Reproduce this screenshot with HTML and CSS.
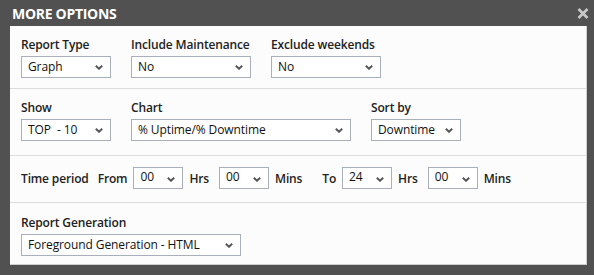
FILE: index.html
```html
<!DOCTYPE html>
<html>
<head>
<meta charset="utf-8">
<link rel="stylesheet" href="styles.css">
</head>
<body>
<div class="dialog">
  <div class="titlebar">
    <span class="title">MORE OPTIONS</span>
    <svg class="close" width="12" height="11" viewBox="0 0 12 11"><path d="M1.5 1 L10.5 10 M10.5 1 L1.5 10" stroke="#c8c8c8" stroke-width="2.6" fill="none"/></svg>
  </div>
  <div class="panel">
    <div class="section s1">
      <div class="field w90">
        <div class="label">Report Type</div>
        <div class="select"><span>Graph</span><svg class="chev" width="8" height="5" viewBox="0 0 8 5"><path d="M0.8 0.8 L4 3.8 L7.2 0.8" stroke="#555" stroke-width="1.9" fill="none"/></svg></div>
      </div>
      <div class="field w120">
        <div class="label">Include Maintenance</div>
        <div class="select"><span>No</span><svg class="chev" width="8" height="5" viewBox="0 0 8 5"><path d="M0.8 0.8 L4 3.8 L7.2 0.8" stroke="#555" stroke-width="1.9" fill="none"/></svg></div>
      </div>
      <div class="field w110">
        <div class="label">Exclude weekends</div>
        <div class="select"><span>No</span><svg class="chev" width="8" height="5" viewBox="0 0 8 5"><path d="M0.8 0.8 L4 3.8 L7.2 0.8" stroke="#555" stroke-width="1.9" fill="none"/></svg></div>
      </div>
    </div>
    <div class="section s2">
      <div class="field w90">
        <div class="label">Show</div>
        <div class="select"><span>TOP &nbsp;- 10</span><svg class="chev" width="8" height="5" viewBox="0 0 8 5"><path d="M0.8 0.8 L4 3.8 L7.2 0.8" stroke="#555" stroke-width="1.9" fill="none"/></svg></div>
      </div>
      <div class="field w220">
        <div class="label">Chart</div>
        <div class="select"><span>% Uptime/% Downtime</span><svg class="chev" width="8" height="5" viewBox="0 0 8 5"><path d="M0.8 0.8 L4 3.8 L7.2 0.8" stroke="#555" stroke-width="1.9" fill="none"/></svg></div>
      </div>
      <div class="field w90">
        <div class="label">Sort by</div>
        <div class="select"><span>Downtime</span><svg class="chev" width="8" height="5" viewBox="0 0 8 5"><path d="M0.8 0.8 L4 3.8 L7.2 0.8" stroke="#555" stroke-width="1.9" fill="none"/></svg></div>
      </div>
    </div>
    <div class="section s3">
      <span class="label tp">Time period</span>
      <span class="label from">From</span>
      <div class="select small"><span>00</span><svg class="chev" width="8" height="5" viewBox="0 0 8 5"><path d="M0.8 0.8 L4 3.8 L7.2 0.8" stroke="#555" stroke-width="1.9" fill="none"/></svg></div>
      <span class="label unit">Hrs</span>
      <div class="select small"><span>00</span><svg class="chev" width="8" height="5" viewBox="0 0 8 5"><path d="M0.8 0.8 L4 3.8 L7.2 0.8" stroke="#555" stroke-width="1.9" fill="none"/></svg></div>
      <span class="label unit">Mins</span>
      <span class="label to">To</span>
      <div class="select small"><span>24</span><svg class="chev" width="8" height="5" viewBox="0 0 8 5"><path d="M0.8 0.8 L4 3.8 L7.2 0.8" stroke="#555" stroke-width="1.9" fill="none"/></svg></div>
      <span class="label unit">Hrs</span>
      <div class="select small"><span>00</span><svg class="chev" width="8" height="5" viewBox="0 0 8 5"><path d="M0.8 0.8 L4 3.8 L7.2 0.8" stroke="#555" stroke-width="1.9" fill="none"/></svg></div>
      <span class="label unit">Mins</span>
    </div>
    <div class="section s4">
      <div class="field w220">
        <div class="label">Report Generation</div>
        <div class="select"><span>Foreground Generation - HTML</span><svg class="chev" width="8" height="5" viewBox="0 0 8 5"><path d="M0.8 0.8 L4 3.8 L7.2 0.8" stroke="#555" stroke-width="1.9" fill="none"/></svg></div>
      </div>
    </div>
  </div>
</div>
</body>
</html>
```
FILE: styles.css
```css
html, body {
  margin: 0;
  padding: 0;
  background: #515151;
  width: 594px;
  height: 275px;
  overflow: hidden;
}
.dialog {
  font-family: "Open Sans", "Noto Sans", sans-serif;
  font-size: 12px;
  color: #222;
}
.titlebar {
  height: 26px;
  display: flex;
  align-items: center;
  justify-content: space-between;
  padding: 0 5px 0 12px;
}
.title {
  color: #fff;
  font-weight: 700;
  font-size: 14px;
  letter-spacing: -0.3px;
}
.close {
  display: block;
}
.panel {
  margin: 0 7px 0 10px;
  background: #fcfcfc;
  border-right: 1px solid #cfcfcf;
  border-bottom: 1px solid #cfcfcf;
  height: 239px;
  box-sizing: border-box;
}
.section {
  display: flex;
  padding-left: 11px;
  border-bottom: 1px solid #dcdcdc;
  box-sizing: border-box;
}
.section:last-child { border-bottom: none; }
.s1 { height: 63px; padding-top: 11px; gap: 20px; }
.s2 { height: 67px; padding-top: 11px; gap: 20px; }
.s3 { height: 47px; padding-top: 11px; align-items: flex-start; }
.s4 { padding-top: 12px; }
.field {
  display: flex;
  flex-direction: column;
  gap: 3px;
  flex: none;
}
.label {
  font-weight: 600;
  line-height: 16px;
  color: #222;
  white-space: nowrap;
  letter-spacing: -0.15px;
}
.select {
  box-sizing: border-box;
  height: 22px;
  border: 1px solid #aab0bb;
  background: #fff;
  display: flex;
  align-items: center;
  justify-content: space-between;
  padding: 0 7px 0 6px;
  color: #111;
  white-space: nowrap;
  letter-spacing: -0.1px;
}
.select span { line-height: 16px; }
.chev { display: block; flex: none; }
.w90 { width: 90px; }
.w120 { width: 120px; }
.w110 { width: 110px; }
.w220 { width: 220px; }
.small {
  width: 50px;
  flex: none;
  align-items: flex-start;
  padding-top: 1px;
}
.small .chev { margin-top: 8px; }
.s3 .label { line-height: 22px; margin-top: 1px; }
.tp { margin-right: 9px; }
.from { margin-right: 6px; }
.unit { margin-left: 6px; margin-right: 10px; }
.to { margin-left: 10px; margin-right: 6px; }
```
